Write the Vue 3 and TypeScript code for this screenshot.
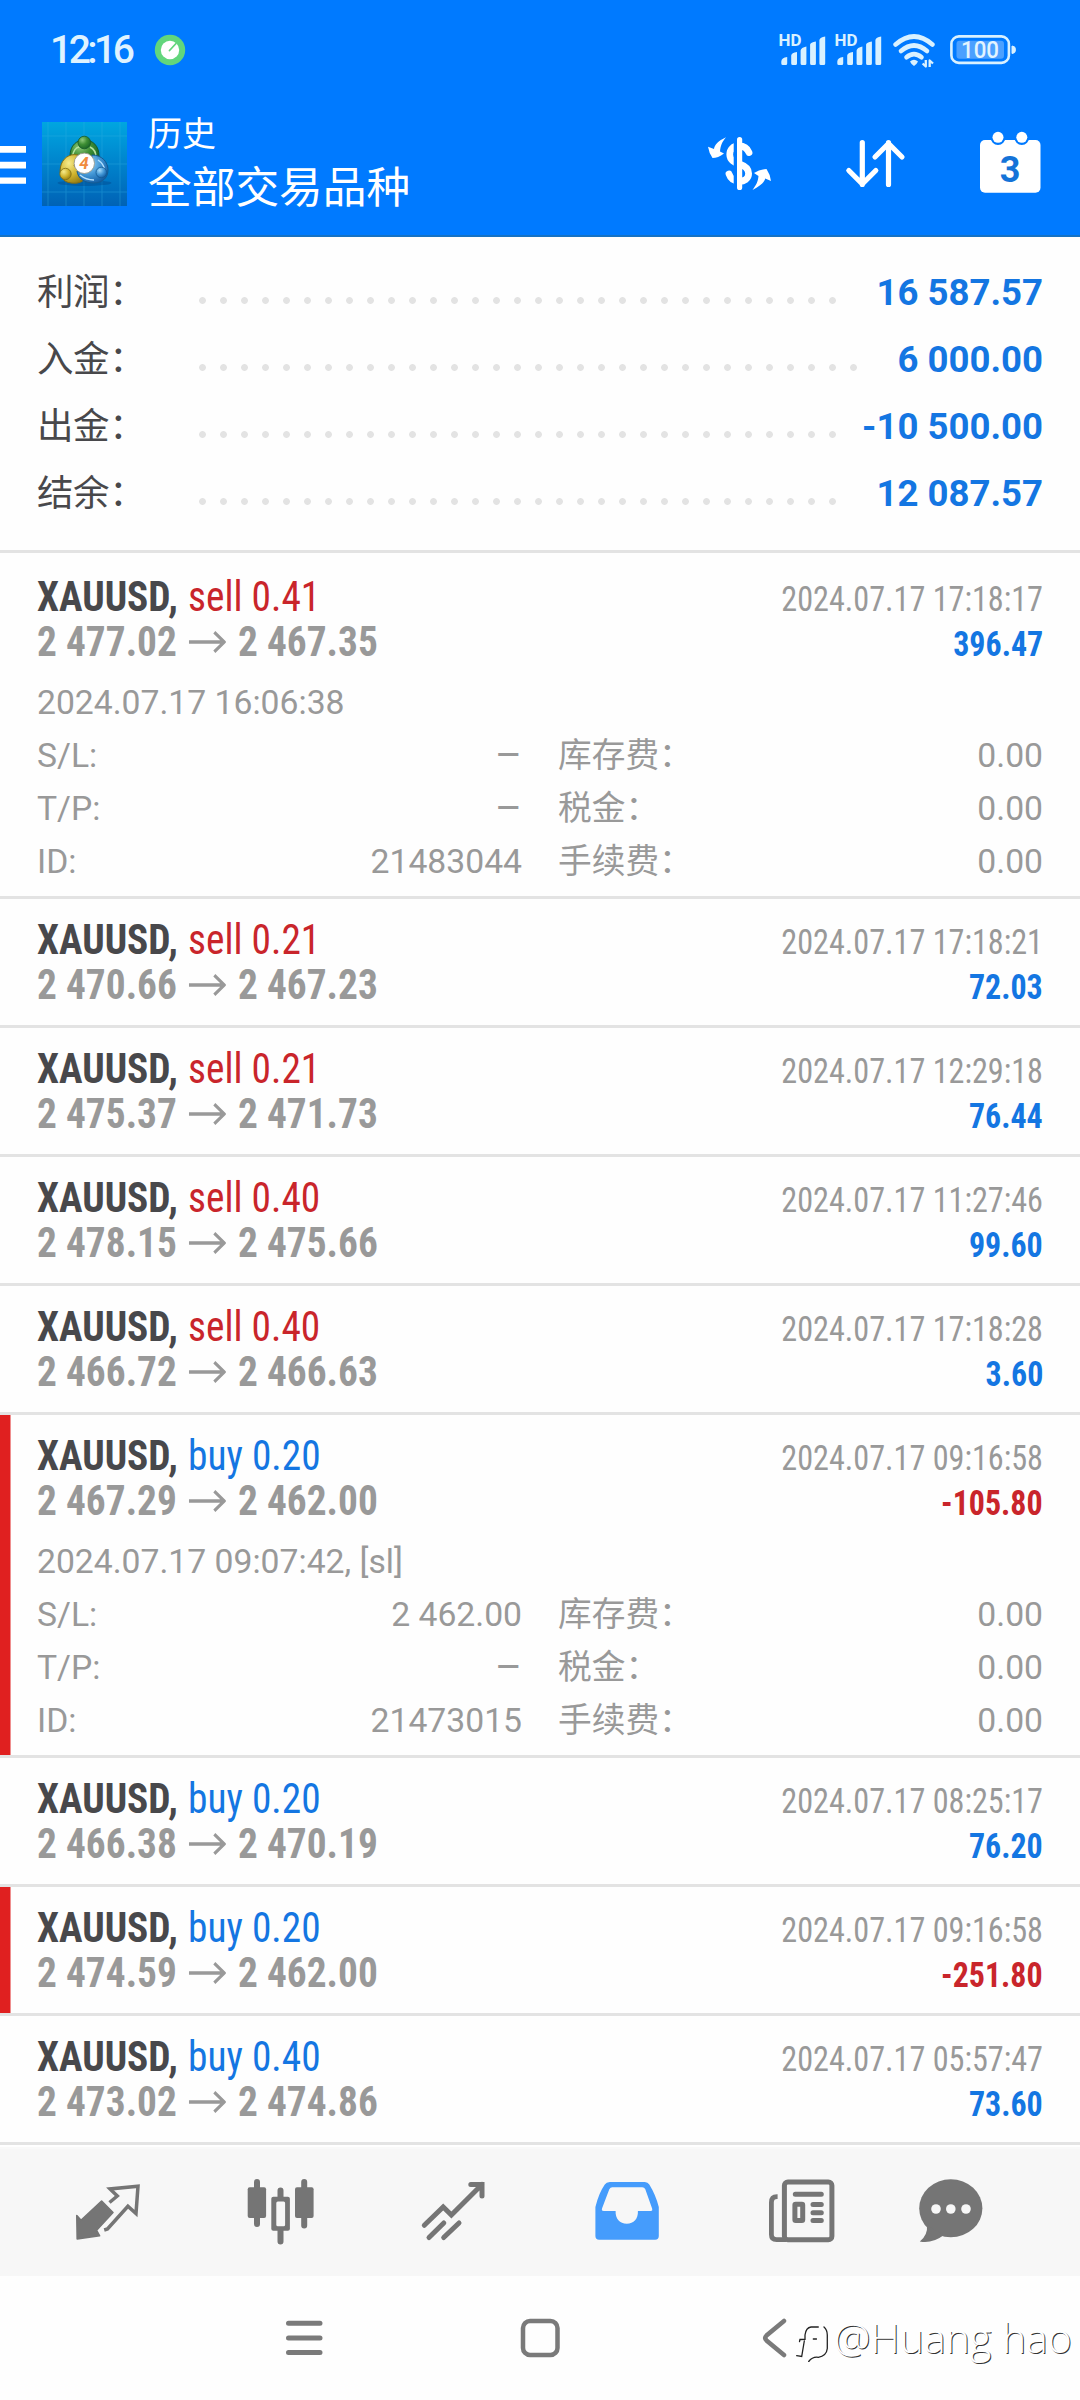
<script setup lang="ts">
interface SummaryRow {
  label: string
  value: string
  dots: number
}

interface Details {
  opened: string
  rows: { label: string; value: string; feeLabel: string; fee: string }[]
}

interface Deal {
  side: 'sell' | 'buy'
  volume: string
  open: string
  close: string
  time: string
  profit: string
  loss?: boolean
  details?: Details
}

const summary: SummaryRow[] = [
  { label: '利润：', value: '16 587.57', dots: 31 },
  { label: '入金：', value: '6 000.00', dots: 32 },
  { label: '出金：', value: '-10 500.00', dots: 31 },
  { label: '结余：', value: '12 087.57', dots: 31 },
]

function makeDetails(opened: string, sl: string, tp: string, id: string): Details {
  return {
    opened,
    rows: [
      { label: 'S/L:', value: sl, feeLabel: '库存费：', fee: '0.00' },
      { label: 'T/P:', value: tp, feeLabel: '税金：', fee: '0.00' },
      { label: 'ID:', value: id, feeLabel: '手续费：', fee: '0.00' },
    ],
  }
}

const deals: Deal[] = [
  { side: 'sell', volume: '0.41', open: '2 477.02', close: '2 467.35', time: '2024.07.17 17:18:17', profit: '396.47', details: makeDetails('2024.07.17 16:06:38', '–', '–', '21483044') },
  { side: 'sell', volume: '0.21', open: '2 470.66', close: '2 467.23', time: '2024.07.17 17:18:21', profit: '72.03' },
  { side: 'sell', volume: '0.21', open: '2 475.37', close: '2 471.73', time: '2024.07.17 12:29:18', profit: '76.44' },
  { side: 'sell', volume: '0.40', open: '2 478.15', close: '2 475.66', time: '2024.07.17 11:27:46', profit: '99.60' },
  { side: 'sell', volume: '0.40', open: '2 466.72', close: '2 466.63', time: '2024.07.17 17:18:28', profit: '3.60' },
  { side: 'buy', volume: '0.20', open: '2 467.29', close: '2 462.00', time: '2024.07.17 09:16:58', profit: '-105.80', loss: true, details: makeDetails('2024.07.17 09:07:42, [sl]', '2 462.00', '–', '21473015') },
  { side: 'buy', volume: '0.20', open: '2 466.38', close: '2 470.19', time: '2024.07.17 08:25:17', profit: '76.20' },
  { side: 'buy', volume: '0.20', open: '2 474.59', close: '2 462.00', time: '2024.07.17 09:16:58', profit: '-251.80', loss: true },
  { side: 'buy', volume: '0.40', open: '2 473.02', close: '2 474.86', time: '2024.07.17 05:57:47', profit: '73.60' },
]
</script>

<template>
  <div class="screen">
    <header class="header">
      <div class="status">
        <span class="clock">12:16</span>
        <svg class="badge" width="32" height="32" viewBox="0 0 32 32">
          <circle cx="16" cy="16" r="15.2" fill="#62d67c" />
          <circle cx="16" cy="16" r="9.2" fill="#fff" />
          <path d="M15.5 16.5 L22 9.5" stroke="#62d67c" stroke-width="1.8" stroke-linecap="round" />
        </svg>
        <svg v-for="n in 2" :key="n" class="signal" width="48" height="36" viewBox="0 0 48 36">
          <text x="-0.5" y="14.3" font-size="16.5" font-weight="700" class="svg-text" fill="#d9f1ff" textLength="23" lengthAdjust="spacingAndGlyphs">HD</text>
          <path fill="#d9f1ff" d="M2.300 29.500 Q2.500 25.500 8.200 25 V31.500 Q8.200 33 6.700 33 H3.800 Q2.300 33 2.300 31.500z M12.200 23.500 Q12.500 20.500 18 20 V31.500 Q18 33 16.500 33 H13.700 Q12.200 33 12.200 31.500z M21.600 18.500 Q22 15.500 27.400 14.500 V31.500 Q27.400 33 25.900 33 H23.100 Q21.600 33 21.600 31.500z M31.100 12.500 Q31.500 10.500 36.900 9.500 V31.500 Q36.900 33 35.400 33 H32.600 Q31.100 33 31.100 31.500z M40.400 8 Q41 5 46.200 4.500 V31.500 Q46.200 33 44.700 33 H41.900 Q40.400 33 40.400 31.500z" />
        </svg>
        <svg class="wifi" width="46" height="38" viewBox="0 0 46 38">
          <g fill="none" stroke="#d9f1ff" stroke-width="4.600" stroke-linecap="round">
            <path d="M4.600 13.500 Q23 -2.500 41.400 13.500" />
            <path d="M10 20 Q23 9 36 20" />
            <path d="M15.500 26.300 Q23 20 30.500 26.300" />
          </g>
          <path d="M19 30.500 Q23 27 27 30.500 Q26 33 23 35 Q20 33 19 30.500z" fill="#d9f1ff" />
          <path d="M34.800 29 V35.500 L31.600 32.500 M38.700 36 V29.500 L42 32.500" fill="none" stroke="#d9f1ff" stroke-width="2.300" stroke-linejoin="round" />
        </svg>
        <svg class="battery" width="68" height="30" viewBox="0 0 68 30">
          <rect x="1.400" y="1.400" width="57.500" height="26.500" rx="7.500" fill="none" stroke="#d9f1ff" stroke-width="2.600" />
          <rect x="6.500" y="5.700" width="47.500" height="18" rx="3" fill="#4ba0ff" />
          <path d="M62 11 Q65.500 11 65.500 14.700 Q65.500 18.500 62 18.500z" fill="#d9f1ff" stroke="#d9f1ff" />
          <text x="11" y="23" font-size="23" font-weight="500" class="svg-text" fill="#e2f4ff" textLength="38" lengthAdjust="spacingAndGlyphs">100</text>
        </svg>
      </div>
      <div class="toolbar">
        <svg width="26" height="40" viewBox="0 0 26 40">
          <path d="M0 2h26v6.800H0zM0 17.800h26v6.800H0zM0 33.500h26v6.300H0z" fill="#fff" />
        </svg>
        <svg class="logo" width="85" height="84" viewBox="0 0 85 84">
          <defs>
            <linearGradient id="bg" x1="0" y1="0" x2="0" y2="1">
              <stop offset="0" stop-color="#00a6e0" />
              <stop offset="0.500" stop-color="#0083cc" />
              <stop offset="1" stop-color="#0062b5" />
            </linearGradient>
            <radialGradient id="green" cx="0.350" cy="0.300" r="0.800">
              <stop offset="0" stop-color="#8fc97b" />
              <stop offset="0.450" stop-color="#3f8f35" />
              <stop offset="1" stop-color="#145f24" />
            </radialGradient>
            <radialGradient id="gold" cx="0.350" cy="0.300" r="0.800">
              <stop offset="0" stop-color="#f6eb8c" />
              <stop offset="0.550" stop-color="#cfb32c" />
              <stop offset="1" stop-color="#8d7612" />
            </radialGradient>
            <radialGradient id="blue" cx="0.350" cy="0.300" r="0.800">
              <stop offset="0" stop-color="#a8dcfa" />
              <stop offset="0.500" stop-color="#4397d6" />
              <stop offset="1" stop-color="#0c569e" />
            </radialGradient>
          </defs>
          <rect width="85" height="84" fill="url(#bg)" />
          <path d="M6 0V84M24 0V84M42 0V84M60 0V84M78 0V84M0 14H85M0 42H85M0 70H85" stroke="#35b3e4" stroke-width="0.800" opacity="0.450" />
          <ellipse cx="42.500" cy="61" rx="27" ry="3" fill="#003d7e" opacity="0.350" />
          <path d="M28 34 C28 23 35 18 42.500 18 C51 18 57 24 57 34 Q56 42 50 42 H34 Q28 41 28 34z" fill="url(#green)" stroke="#175b2a" stroke-width="1" />
          <path d="M30.500 34 Q32 26 37 25 M48 25 Q54 28 54 35" fill="none" stroke="#b3e1a0" stroke-width="1.500" />
          <path d="M36 33 C27 31 20 37 18.500 45 C17 53 20 60 29 61 C36 62 42 60 43 55 L32 44z" fill="url(#gold)" stroke="#806d16" stroke-width="1" />
          <path d="M50 33 C60 33 66 40 66 48 C66 56 60 61 52 61 C43 61 36 57 35 49 Q42 53 49 48z" fill="url(#blue)" stroke="#155b93" stroke-width="1" />
          <path d="M56 38 Q62 42 62.500 48 M38 53 Q44 58 52 58" fill="none" stroke="#b5e1ff" stroke-width="1.500" />
          <circle cx="42.300" cy="20.500" r="6.300" fill="url(#green)" stroke="#175b2a" stroke-width="0.800" />
          <circle cx="23.500" cy="52" r="5.700" fill="url(#gold)" stroke="#806d16" stroke-width="0.800" />
          <circle cx="59.300" cy="50.500" r="5.300" fill="url(#blue)" stroke="#155b93" stroke-width="0.800" />
          <circle cx="42.300" cy="41.300" r="10.200" fill="#fff" stroke="#9a9a8b" stroke-width="0.900" />
          <text x="42" y="47.300" text-anchor="middle" font-size="17" font-weight="700" font-style="italic" class="svg-text" fill="#f08b3e">4</text>
        </svg>
        <div class="titles">
          <div class="title-small">历史</div>
          <div class="title-big">全部交易品种</div>
        </div>
        <svg class="ico-dollar" width="72" height="64" viewBox="0 0 72 64">
          <path d="M45 20.500 C43 15.500 39 14 35 14 C29 14 25.800 17.500 25.800 22.500 C25.800 28.500 31 30.500 36 32.300 C41 34 44.600 36.300 44.600 41.500 C44.600 47 40 49.300 35.500 49.300 C30 49.300 26.500 46.500 25 42" fill="none" stroke="#fff" stroke-width="6.800" stroke-linecap="round" />
          <path d="M31.500 4 V60" stroke="#007aff" stroke-width="3.600" />
          <path d="M35.600 7.500 V55.500" stroke="#fff" stroke-width="5.200" stroke-linecap="round" />
          <path d="M22 5.300 C14 9 10.500 13 10 17 L4 14.700 Q5 21 8.500 26 Q14 26 20 21.500 L16 19.500 C16.500 14 18 10 22 5.300z M48.500 58 C56 54 60 51 61.200 46.500 L67 49 Q66 42 62.500 37 Q56 37.500 50 41 L54.500 44 C54 50 52 53 48.500 58z" fill="#fff" />
        </svg>
        <svg class="ico-sort" width="68" height="56" viewBox="0 0 68 56">
          <path d="M20.300 6.500V48.500M6.800 34.500L20.300 48L33.800 34.500M46.500 48.500V6.500M33 21L46.500 7.500L60 21" fill="none" stroke="#fff" stroke-width="5.200" stroke-linecap="round" stroke-linejoin="round" />
        </svg>
        <svg class="ico-cal" width="72" height="72" viewBox="0 0 72 72">
          <rect x="4" y="12" width="60.500" height="52.700" rx="5" fill="#fff" />
          <path d="M22 6V9.500M45.800 6V9.500" stroke="#007aff" stroke-width="15" stroke-linecap="round" />
          <circle cx="22" cy="9.300" r="5.500" fill="#fff" />
          <circle cx="45.800" cy="9.300" r="5.500" fill="#fff" />
          <text x="34.200" y="53.600" text-anchor="middle" font-size="36" font-weight="700" class="svg-text" fill="#1473d8">3</text>
        </svg>
      </div>
    </header>

    <section class="summary">
      <div v-for="row in summary" :key="row.label" class="sum-row">
        <span class="sum-label">{{ row.label }}</span>
        <span class="leader" :style="{ width: row.dots * 21 + 'px' }"></span>
        <span class="sum-value">{{ row.value }}</span>
      </div>
    </section>

    <main class="deals">
      <article v-for="(deal, i) in deals" :key="i" class="deal" :class="{ loss: deal.loss }">
        <div class="line">
          <div class="lead">
            <span class="symbol">XAUUSD,</span>
            <span class="order" :class="deal.side">{{ deal.side }} {{ deal.volume }}</span>
          </div>
          <span class="time">{{ deal.time }}</span>
        </div>
        <div class="line">
          <div class="lead">
            <span class="price">{{ deal.open }}</span>
            <svg class="arrow" width="40" height="22" viewBox="0 0 40 22">
              <path d="M0 11H38M27.500 1.300L38.300 11L27.500 20.700" fill="none" stroke="#999" stroke-width="3.300" />
            </svg>
            <span class="price">{{ deal.close }}</span>
          </div>
          <span class="profit">{{ deal.profit }}</span>
        </div>
        <div v-if="deal.details" class="details">
          <div class="opened">{{ deal.details.opened }}</div>
          <div v-for="row in deal.details.rows" :key="row.label" class="detail-row">
            <span>{{ row.label }}</span>
            <span class="detail-value" :class="{ empty: row.value === '–' }">{{ row.value }}</span>
            <span class="fee-label">{{ row.feeLabel }}</span>
            <span class="fee">{{ row.fee }}</span>
          </div>
        </div>
      </article>
    </main>

    <nav class="tabs">
      <svg width="72" height="72" viewBox="0 0 72 72">
        <path d="M30.600 26 L42 37.500 L25.600 55.300 L28.600 60.800 L6.200 64 L5.800 40.500 L10 45.300z" fill="#757575" stroke="#757575" stroke-width="1.600" stroke-linejoin="round" />
        <path d="M38.500 27.500 L46.300 21 L39 13.900 L67 11.200 L65 38.500 L56.900 31.300 L36.500 54 L33.200 55" fill="none" stroke="#757575" stroke-width="3.500" />
      </svg>
      <svg width="72" height="72" viewBox="1.5 0 72 72">
        <path d="M13.500 7V49M37 15.500V24M37 54V66.500M60.700 7V50.500" stroke="#757575" stroke-width="6" stroke-linecap="round" />
        <rect x="4.200" y="12.300" width="18.400" height="30.800" rx="2" fill="#757575" />
        <rect x="51.500" y="12.300" width="18.600" height="30.800" rx="2" fill="#757575" />
        <rect x="27.800" y="21.700" width="18.600" height="34" rx="2" fill="#757575" />
        <rect x="32.800" y="26.500" width="8.800" height="24.800" rx="1.500" fill="#f7f7f7" />
      </svg>
      <svg width="72" height="72" viewBox="0 0 72 72">
        <path d="M6.300 50.300L25.200 32L33.400 40L64 9.500M52.800 9.500H64V21M11 62.500L25.800 48M25.700 62.500L41 48" fill="none" stroke="#757575" stroke-width="5" stroke-linecap="round" />
      </svg>
      <svg width="72" height="72" viewBox="1.2 0 72 72">
        <path fill-rule="evenodd" fill="#459cfc" d="M19 7H54Q57 7 58.500 9.500Q65 20 68 32V61Q68 64.700 64.300 64.700H8.300Q4.600 64.700 4.600 61V32Q8 18 14 9.500Q15.500 7 19 7zM21.500 12.300Q19.500 12.300 18.500 14.300L11.200 33.500Q10.500 36 13 36H24.800C24.500 44 29 48.700 36 48.700C43 48.700 47.500 44 47.100 36H60Q62 36 61.300 33.500L54.500 14.300Q53.500 12.300 51.500 12.300z" />
      </svg>
      <svg width="72" height="72" viewBox="0 0 72 72">
        <rect x="19.400" y="7" width="47.500" height="57.700" rx="3.500" fill="none" stroke="#757575" stroke-width="5" />
        <path d="M12.600 21.700H12Q6.400 21.700 6.400 27.500V59.500Q6.400 64.700 11.600 64.700H21" fill="none" stroke="#757575" stroke-width="4.800" />
        <path d="M30.300 19.300H56.300M48 29.500H56.300M48 37.700H56.300M48 45.500H56.300" stroke="#757575" stroke-width="5" stroke-linecap="round" />
        <rect x="29.900" y="29.200" width="7.800" height="16.300" rx="0.800" fill="none" stroke="#757575" stroke-width="5" stroke-linejoin="round" />
      </svg>
      <svg class="tab-last" width="72" height="72" viewBox="0 0 72 72">
        <ellipse cx="35.800" cy="33.300" rx="31.600" ry="29" fill="#757575" />
        <path d="M12 50Q13 60 4.800 66.500Q17 69 29 60z" fill="#757575" />
        <g fill="#f7f7f7">
          <circle cx="21" cy="34" r="4.800" />
          <circle cx="35.800" cy="34" r="4.800" />
          <circle cx="51" cy="34" r="4.800" />
        </g>
      </svg>
    </nav>

    <footer class="sysnav">
      <svg width="48" height="48" viewBox="0 0 48 48">
        <path d="M8.500 9.300H40M8.500 24H40M8.500 38.600H40" stroke="#7a7a7a" stroke-width="5" stroke-linecap="round" />
      </svg>
      <svg width="48" height="48" viewBox="0 0 48 48">
        <rect x="7" y="7" width="34.500" height="34" rx="7" fill="none" stroke="#7a7a7a" stroke-width="4.500" />
      </svg>
      <svg width="48" height="48" viewBox="0 0 48 48">
        <path d="M32 7L14.500 21.500Q12 24 14.500 26.500L32 41" fill="none" stroke="#7a7a7a" stroke-width="4.500" stroke-linecap="round" />
      </svg>
      <div class="watermark">
        <svg width="34" height="50" viewBox="0 -3 34 50">
          <path fill="none" stroke="#222" stroke-width="1.300" stroke-linecap="round" d="M3.500 26.500L4 24.500L9 24.300V20Q10 12.500 15 12H22.300M17.300 24H20.500M8.300 26L5.700 41.500L0.700 40.700M28 12Q31.300 15 31.300 20V33.500Q30.500 41 22.300 42.300Q16.500 41.500 12.700 46.500" />
        </svg>
        <span>@Huang hao</span>
      </div>
    </footer>
  </div>
</template>

<style>
body {
  margin: 0;
  background: #fff;
}
</style>

<style scoped>
.screen {
  width: 1080px;
  height: 2400px;
  overflow: hidden;
  display: flex;
  flex-direction: column;
  background: #fefefe;
  font-family: Roboto, "Noto Sans CJK SC", sans-serif;
  color: #48484b;
}
.screen svg {
  display: block;
  flex: none;
}
.svg-text {
  font-family: Roboto, sans-serif;
}
.header {
  box-sizing: border-box;
  height: 237px;
  flex: none;
  background: #007aff;
  border-bottom: 2px solid #1672c4;
  color: #fff;
}
.status {
  height: 100px;
  display: flex;
  align-items: center;
}
.clock {
  box-sizing: border-box;
  width: 154px;
  padding-left: 50px;
  font-size: 39px;
  font-weight: 500;
  letter-spacing: -3.500px;
  color: #dff3ff;
  white-space: nowrap;
}
.badge {
  margin-right: auto;
}
.signal {
  margin-right: 8px;
}
.wifi {
  margin-right: 13px;
}
.battery {
  margin-right: 62px;
}
.toolbar {
  height: 128px;
  display: flex;
  align-items: center;
}
.logo {
  margin-left: 16px;
}
.titles {
  height: 103px;
  margin-left: 21px;
  margin-right: auto;
  white-space: nowrap;
}
.title-small {
  font-size: 34px;
  line-height: 42px;
}
.title-big {
  margin-top: 4px;
  font-size: 43.700px;
  line-height: 58px;
}
.ico-dollar {
  margin-right: 66px;
}
.ico-sort {
  margin-right: 66px;
}
.ico-cal {
  margin-right: 32px;
}
.summary {
  flex: none;
  padding: 22px 37px 23px;
  border-bottom: 3px solid #e3e3e3;
}
.sum-row {
  display: flex;
  height: 67px;
  line-height: 67px;
  font-size: 36.500px;
}
.sum-label {
  width: 155px;
  flex: none;
  letter-spacing: -0.400px;
  white-space: nowrap;
}
.leader {
  height: 67px;
  flex: none;
  background: radial-gradient(circle at 10.500px 41.500px, #e3e3e3 3px, transparent 3.800px) 0 0 / 21px 67px repeat-x;
}
.sum-value {
  margin-left: auto;
  font-weight: 700;
  font-size: 36.600px;
  color: #1476e2;
  white-space: nowrap;
}
.deals {
  flex: none;
  padding-top: 3px;
}
.deal {
  box-sizing: border-box;
  padding: 18px 37px 0;
  min-height: 129px;
  border-bottom: 3px solid #e3e3e3;
}
.deal.loss {
  background: linear-gradient(#e02020, #e02020) 0 0 / 10.500px 100% no-repeat;
  background-clip: padding-box;
}
.line {
  display: flex;
  align-items: baseline;
  justify-content: space-between;
  height: 45px;
  line-height: 45px;
  white-space: nowrap;
  font-stretch: 75%;
}
.lead {
  display: flex;
  align-items: baseline;
  font-size: 42.500px;
  transform: scaleX(0.926);
  transform-origin: left;
}
.symbol {
  font-weight: 700;
}
.order {
  margin-left: 11px;
}
.sell {
  color: #c9252b;
}
.buy {
  color: #1476e2;
}
.time {
  font-size: 34.300px;
  color: #999;
  transform: scaleX(0.938);
  transform-origin: right;
}
.price {
  font-weight: 700;
  color: #999;
}
.arrow {
  align-self: center;
  margin: 0 13px;
}
.profit {
  font-size: 34.500px;
  font-weight: 700;
  color: #1476e2;
  transform: scaleX(0.926);
  transform-origin: right;
}
.loss .profit {
  color: #c9252b;
}
.details {
  padding: 12px 0 8px;
  font-size: 33.700px;
  line-height: 53px;
  color: #999;
  white-space: nowrap;
}
.detail-row {
  display: grid;
  grid-template-columns: 110px 375px 300px 1fr;
}
.detail-value {
  text-align: right;
}
.detail-value.empty {
  font-size: 41px;
}
.fee-label {
  padding-left: 36px;
}
.fee {
  text-align: right;
}
.tabs {
  box-sizing: border-box;
  flex: none;
  margin-top: 2px;
  height: 129px;
  padding: 0 0 4px 71px;
  border-top: 2px solid #f9f9f9;
  background: #f7f7f7;
  display: flex;
  align-items: center;
  gap: 101.500px;
}
.tab-last {
  margin-left: -23.500px;
}
.sysnav {
  position: relative;
  flex: none;
  height: 124px;
  padding-left: 280px;
  display: flex;
  align-items: center;
  gap: 188px;
}
.watermark {
  position: absolute;
  left: 796px;
  top: 37px;
  display: flex;
  align-items: center;
  height: 48px;
}
.watermark span {
  margin-left: 4px;
  font-family: "Open Sans", "Noto Sans", sans-serif;
  font-weight: 300;
  font-size: 41px;
  line-height: 48px;
  color: #fff;
  white-space: nowrap;
  text-shadow: 1px 1px 0.500px #333;
}
</style>
